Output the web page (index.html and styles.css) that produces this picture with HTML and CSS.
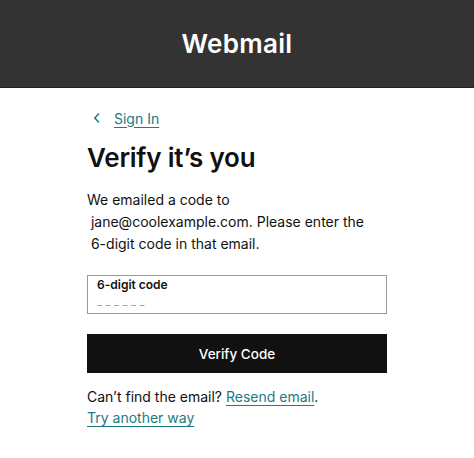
FILE: index.html
```html
<!DOCTYPE html>
<html>
<head>
<meta charset="utf-8">
<link rel="stylesheet" href="styles.css">
</head>
<body>
<header class="topbar"><h1 class="brand">Webmail</h1></header>
<main class="content">
  <a class="back" href="#"><svg class="chev" width="8" height="12" viewBox="0 0 8 12"><path d="M6 1.5 L1.8 6 L6 10.5" fill="none" stroke="#1c7a80" stroke-width="1.5"/></svg><span class="back-text">Sign In</span></a>
  <h2 class="title">Verify it’s you</h2>
  <p class="desc">We emailed a code to<br>&nbsp;jane@coolexample.com. Please enter the<br>&nbsp;6-digit code in that email.</p>
  <div class="field">
    <label class="field-label">6-digit code</label>
    <div class="field-ph">––––––</div>
  </div>
  <button class="btn">Verify Code</button>
  <p class="help">Can’t find the email? <a href="#" class="link">Resend email</a>.</p>
  <a href="#" class="link">Try another way</a>
</main>
</body>
</html>
```
FILE: styles.css
```css
* { box-sizing: border-box; }
body { margin: 0; font-family: Inter, "Noto Sans", sans-serif; color: #111; background: #fff; }
.topbar { height: 88px; background: #333; border-bottom: 1px solid #222; display: flex; align-items: center; justify-content: center; }
.brand { margin: 0; color: #fff; font-size: 26px; font-weight: 600; letter-spacing: 0.3px; }
.content { width: 300px; margin: 0 auto; padding-top: 20px; display: flex; flex-direction: column; align-items: flex-start; }
.back { display: flex; align-items: center; gap: 13px; padding-left: 6px; text-decoration: none; color: #1c7a80; font-size: 14px; height: 20px; }
.back-text { text-decoration: underline; text-underline-offset: 3px; }
.title { margin: 13px 0 0; font-size: 26px; font-weight: 600; line-height: 34px; letter-spacing: -0.2px; }
.desc { margin: 14px 0 0; font-size: 14px; line-height: 22px; }
.field { margin-top: 20px; width: 300px; height: 39px; border: 1px solid #999; padding: 1px 9px 0; }
.field-label { display: block; font-size: 12px; font-weight: 600; line-height: 16px; }
.field-ph { color: #999; font-size: 10px; letter-spacing: 3.5px; line-height: 18px; margin-top: 3px; }
.btn { margin-top: 20px; width: 300px; height: 39px; border: 0; background: #111; color: #fff; font-family: inherit; font-size: 13.5px; font-weight: 500; }
.help { margin: 13px 0 0; font-size: 14px; line-height: 22px; }
.link { color: #1c7a80; text-decoration: underline; text-underline-offset: 3px; font-size: 14px; line-height: 20px; }
```
